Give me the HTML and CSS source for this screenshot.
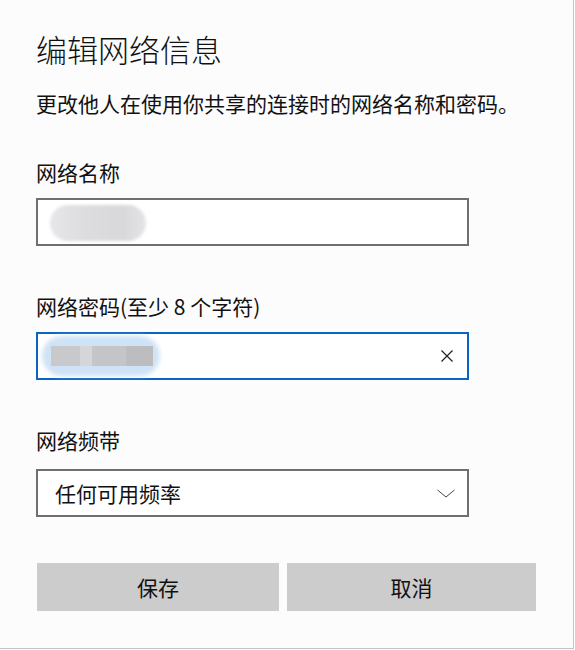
FILE: index.html
```html
<!DOCTYPE html>
<html lang="zh-CN">
<head>
    <meta charset="UTF-8">
    <meta name="viewport" content="width=device-width, initial-scale=1.0">
    <title>编辑网络信息</title>
    <link rel="stylesheet" href="styles.css">
</head>
<body>
    <div class="dialog">
        <h1>编辑网络信息</h1>
        <p class="desc">更改他人在使用你共享的连接时的网络名称和密码。</p>

        <div class="form-group">
            <label for="ssid">网络名称</label>
            <div class="field" id="ssid">
                <span class="blur-name"></span>
            </div>
        </div>

        <div class="form-group">
            <label for="pass">网络密码(至少 8 个字符)</label>
            <div class="field focused" id="pass">
                <span class="selection"></span>
                <span class="blur-pass"></span>
                <svg class="clear-icon" width="14" height="14" viewBox="0 0 14 14">
                    <path d="M1.5 1.5 L12.5 12.5 M12.5 1.5 L1.5 12.5" stroke="#1f1f1f" stroke-width="1.2" fill="none"/>
                </svg>
            </div>
        </div>

        <div class="form-group band">
            <label for="band">网络频带</label>
            <div class="field select" id="band">
                <span class="select-text">任何可用频率</span>
                <svg class="chevron" width="18" height="9" viewBox="0 0 18 9">
                    <path d="M0.5 1 L9 8 L17.5 1" stroke="#444" stroke-width="1" fill="none"/>
                </svg>
            </div>
        </div>

        <div class="actions">
            <button class="btn">保存</button>
            <button class="btn">取消</button>
        </div>
    </div>
</body>
</html>
```

FILE: styles.css
```css
* {
    box-sizing: border-box;
    margin: 0;
    padding: 0;
}

body {
    font-family: "Noto Sans CJK SC", "Noto Sans", sans-serif;
    background: #ffffff;
    color: #111;
}

.dialog {
    width: 574px;
    height: 649px;
    padding: 29px 0 0 36px;
    background-color: #fcfcfd;
    border-right: 1px solid #c4c4c4;
    border-bottom: 1px solid #c4c4c4;
}

h1 {
    font-size: 31px;
    font-weight: 300;
    line-height: 40px;
    color: #111;
}

.desc {
    margin-top: 20px;
    font-size: 21px;
    line-height: 28px;
}

.form-group {
    margin-top: 41px;
    width: 433px;
}

.form-group + .form-group {
    margin-top: 46px;
}

label {
    display: block;
    font-size: 21px;
    line-height: 28px;
    margin-bottom: 12px;
}

.band label {
    margin-bottom: 15px;
}

.field {
    position: relative;
    height: 48px;
    border: 2px solid #6f6f6f;
    background-color: #fff;
    display: flex;
    align-items: center;
}

.field.focused {
    border-color: #0a64c2;
}

.blur-name {
    position: absolute;
    left: 12px;
    top: 5px;
    width: 96px;
    height: 36px;
    border-radius: 18px;
    background: linear-gradient(90deg, #e6e6e8 0%, #dcdcde 40%, #d8d8da 75%, #e4e4e6 100%);
    filter: blur(1.5px);
}

.selection {
    position: absolute;
    left: 4px;
    top: 2px;
    width: 118px;
    height: 40px;
    border-radius: 20px;
    background-color: #cfe3f6;
    filter: blur(2px);
}

.blur-pass {
    position: absolute;
    left: 13px;
    top: 12px;
    width: 102px;
    height: 20px;
    background: linear-gradient(90deg, #c9c9cb 0 28%, #d6d6d8 28% 40%, #c5c5c7 40% 74%, #bdbdbf 74% 100%);
}

.clear-icon {
    position: absolute;
    right: 13px;
    top: 15px;
}

.select {
    padding-left: 17px;
    justify-content: space-between;
    padding-right: 12px;
}

.select-text {
    font-size: 21px;
    line-height: 28px;
}

.actions {
    display: grid;
    grid-template-columns: 242px 249px;
    gap: 8px;
    margin-top: 46px;
    margin-left: 1px;
}

.btn {
    height: 48px;
    border: none;
    background-color: #cccccc;
    font-family: "Noto Sans CJK SC", "Noto Sans", sans-serif;
    font-size: 21px;
    color: #111;
}
```
